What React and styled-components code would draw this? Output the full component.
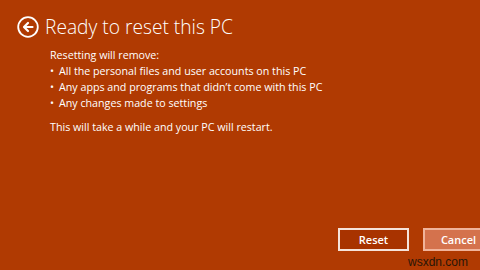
import React from "react";
import styled, { createGlobalStyle } from "styled-components";

const Global = createGlobalStyle`
  html, body { margin: 0; padding: 0; }
  body { width: 480px; height: 270px; overflow: hidden; background: #b03a02; }
`;

const Page = styled.div`
  width: 480px;
  height: 270px;
  box-sizing: border-box;
  background: #b03a02;
  color: #fff;
  font-family: "Open Sans", "Noto Sans", sans-serif;
  display: flex;
  flex-direction: column;
  padding: 12px 0 0 17px;
  position: relative;
`;

const Header = styled.div`
  display: flex;
  align-items: center;
  gap: 6px;
`;

const BackButton = styled.div`
  width: 22px;
  height: 22px;
  display: flex;
`;

const Title = styled.h1`
  margin: 0;
  font-weight: 300;
  font-size: 19.2px;
  line-height: 30px;
`;

const Body = styled.div`
  padding-left: 33px;
  margin-top: 5px;
  font-size: 10.7px;
  line-height: 16px;
`;

const Para = styled.p`
  margin: 0;
`;

const List = styled.ul`
  list-style: none;
  margin: 0 0 8px 0;
  padding: 0;
`;

const Item = styled.li`
  display: flex;
  &::before {
    content: "•";
    width: 9px;
    flex: none;
  }
`;

const Footer = styled.div`
  margin-top: auto;
  display: flex;
  justify-content: flex-end;
  gap: 14px;
  padding-bottom: 19px;
  margin-right: -14px;
`;

const Button = styled.button`
  width: 71px;
  height: 23px;
  box-sizing: border-box;
  border: 2px solid ${(p) => (p.$primary ? "#f5e3da" : "#f0b39a")};
  background: ${(p) => (p.$primary ? "#a83300" : "#d4724d")};
  color: #fff;
  font-family: "Open Sans", "Noto Sans", sans-serif;
  font-weight: 600;
  font-size: 11px;
  padding: 0;
`;

const Watermark = styled.div`
  position: absolute;
  right: 12px;
  bottom: 1px;
  font-family: "Liberation Sans", Arial, sans-serif;
  font-size: 12px;
  color: #2a1608;
`;

export default function App() {
  return (
    <>
      <Global />
      <Page>
        <Header>
          <BackButton>
            <svg width="22" height="22" viewBox="0 0 22 22">
              <circle cx="11" cy="11" r="9.8" fill="none" stroke="#fff" strokeWidth="1.8" />
              <path d="M15.5 11H7.5M11 7L7 11L11 15" fill="none" stroke="#fff" strokeWidth="2.2" strokeLinecap="round" strokeLinejoin="round" />
            </svg>
          </BackButton>
          <Title>Ready to reset this PC</Title>
        </Header>
        <Body>
          <Para>Resetting will remove:</Para>
          <List>
            <Item>All the personal files and user accounts on this PC</Item>
            <Item>Any apps and programs that didn’t come with this PC</Item>
            <Item>Any changes made to settings</Item>
          </List>
          <Para>This will take a while and your PC will restart.</Para>
        </Body>
        <Footer>
          <Button $primary>Reset</Button>
          <Button>Cancel</Button>
        </Footer>
        <Watermark>wsxdn.com</Watermark>
      </Page>
    </>
  );
}
